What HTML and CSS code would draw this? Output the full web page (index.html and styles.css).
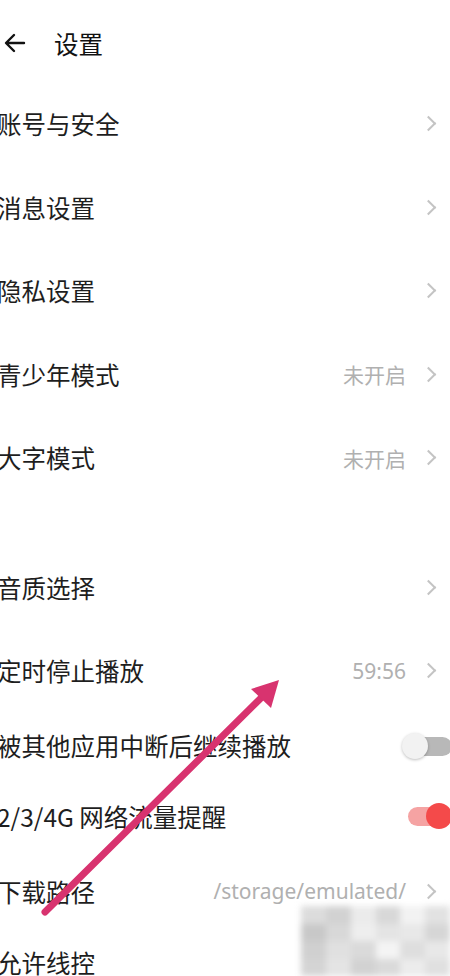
FILE: index.html
```html
<!DOCTYPE html>
<html lang="zh-CN">
<head>
  <meta charset="UTF-8" />
  <meta name="viewport" content="width=device-width, initial-scale=1.0"/>
  <title>设置</title>
  <link rel="stylesheet" href="styles.css">
</head>
<body>
  <div class="page">
    <div class="header">
      <svg class="back" width="22" height="20" viewBox="0 0 22 20">
        <path d="M20 10H3M10 2L2 10l8 8" fill="none" stroke="#111" stroke-width="2.4" stroke-linecap="round" stroke-linejoin="round"/>
      </svg>
      <span class="title">设置</span>
    </div>

    <div class="row"><span class="label">账号与安全</span><span class="right"><i class="chev"></i></span></div>
    <div class="row"><span class="label">消息设置</span><span class="right"><i class="chev"></i></span></div>
    <div class="row"><span class="label">隐私设置</span><span class="right"><i class="chev"></i></span></div>
    <div class="row"><span class="label">青少年模式</span><span class="right"><span class="value">未开启</span><i class="chev"></i></span></div>
    <div class="row"><span class="label">大字模式</span><span class="right"><span class="value">未开启</span><i class="chev"></i></span></div>

    <div class="spacer"></div>

    <div class="row"><span class="label">音质选择</span><span class="right"><i class="chev"></i></span></div>
    <div class="row"><span class="label">定时停止播放</span><span class="right"><span class="value">59:56</span><i class="chev"></i></span></div>
    <div class="row row-s"><span class="label">被其他应用中断后继续播放</span><span class="toggle"><span class="knob"></span></span></div>
    <div class="row row-m"><span class="label">2/3/4G 网络流量提醒</span><span class="toggle on"><span class="knob"></span></span></div>
    <div class="row row-m"><span class="label">下载路径</span><span class="right"><span class="value">/storage/emulated/</span><i class="chev"></i></span></div>
    <div class="row row-s"><span class="label">允许线控</span></div>
  </div>

  <div class="mosaic">
    <span style="background:#dcdcdc"></span><span style="background:#d2d2d2"></span><span style="background:#ebebeb"></span><span style="background:#d8d8d8"></span><span style="background:#f2f2f2"></span><span style="background:#e2e2e2"></span>
    <span style="background:#c8c8c8"></span><span style="background:#d8d8d8"></span><span style="background:#eeeeee"></span><span style="background:#e4e4e4"></span><span style="background:#e8e8e8"></span><span style="background:#d6d6d6"></span>
    <span style="background:#d0d0d0"></span><span style="background:#e0e0e0"></span><span style="background:#dadada"></span><span style="background:#f4f4f4"></span><span style="background:#dedede"></span><span style="background:#e8e8e8"></span>
    <span style="background:#d4d4d4"></span><span style="background:#e4e4e4"></span><span style="background:#d2d2d2"></span><span style="background:#dadada"></span><span style="background:#ececec"></span><span style="background:#e0e0e0"></span>
  </div>

  <svg class="arrow" width="450" height="976" viewBox="0 0 450 976">
    <line x1="45" y1="912" x2="262" y2="697" stroke="#d8336f" stroke-width="7" stroke-linecap="round"/>
    <polygon points="279,680 271,708 251,689" fill="#d8336f"/>
  </svg>
</body>
</html>
```

FILE: styles.css
```css
* {
  box-sizing: border-box;
}

body {
  margin: 0;
  background: #fff;
  font-family: "Noto Sans CJK SC", "Noto Sans", sans-serif;
  color: #1e1e1e;
  overflow: hidden;
}

.page {
  width: 450px;
  height: 976px;
  overflow: hidden;
}

.header {
  height: 82px;
  display: flex;
  align-items: center;
  padding-left: 4px;
  padding-top: 4px;
}

.back {
  flex: none;
}

.title {
  margin-left: 28px;
  font-size: 24.5px;
  color: #111;
}

.row {
  height: 83.5px;
  display: flex;
  align-items: center;
  justify-content: space-between;
  margin-left: -3px;
}

.row-s {
  height: 66px;
}

.row-m {
  height: 75px;
}

.row:last-child {
  height: 68px;
}

.label {
  font-size: 24.5px;
  white-space: nowrap;
}

.right {
  display: flex;
  align-items: center;
  padding-right: 14px;
}

.value {
  font-family: "Noto Sans", "Noto Sans CJK SC", sans-serif;
  font-size: 21px;
  color: #b0b0b0;
  margin-right: 17px;
}

.chev {
  display: block;
  width: 11px;
  height: 11px;
  border-top: 2px solid #c4c4c4;
  border-right: 2px solid #c4c4c4;
  transform: rotate(45deg);
  margin-right: 2px;
}

.spacer {
  height: 46px;
}

.toggle {
  position: relative;
  width: 50px;
  height: 28px;
  margin-right: -2px;
}

.toggle::before {
  content: "";
  position: absolute;
  left: 12px;
  right: 0;
  top: 5px;
  height: 19px;
  border-radius: 10px;
  background: #b8b8b8;
}

.toggle .knob {
  position: absolute;
  left: 0;
  top: 1px;
  width: 26px;
  height: 26px;
  border-radius: 50%;
  background: #f2f2f2;
  box-shadow: 0 1px 3px rgba(0, 0, 0, 0.25);
}

.toggle.on::before {
  left: 6px;
  right: 10px;
  background: #f5a3a3;
}

.toggle.on .knob {
  left: 24px;
  background: #f44a4a;
  box-shadow: none;
}

.mosaic {
  position: absolute;
  left: 301px;
  top: 906px;
  width: 149px;
  height: 70px;
  display: grid;
  grid-template-columns: repeat(6, 1fr);
  grid-template-rows: repeat(4, 1fr);
  filter: blur(3px);
}

.arrow {
  position: absolute;
  left: 0;
  top: 0;
  pointer-events: none;
}
```
